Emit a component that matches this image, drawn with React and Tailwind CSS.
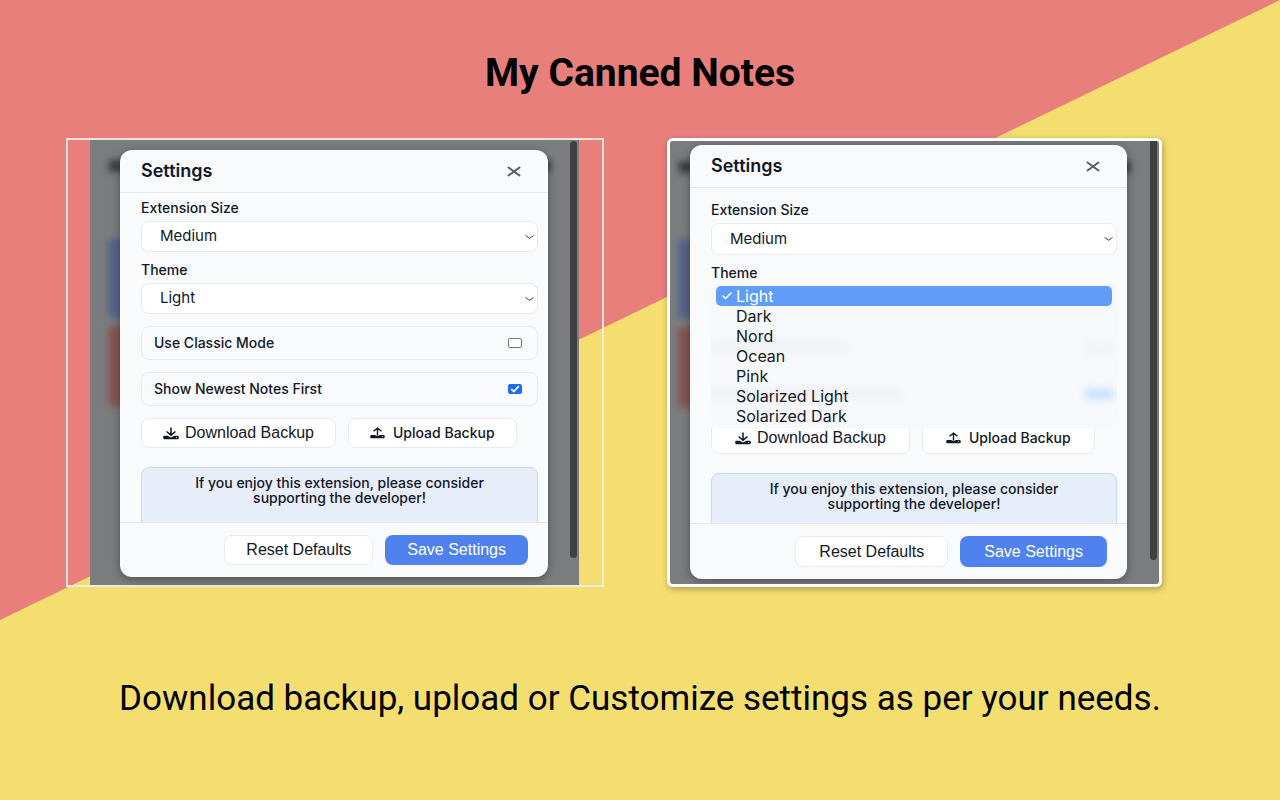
import { useState } from "react";
import { Check } from "lucide-react";

const sizes = ["Small", "Medium", "Large"];
const themes = [
  "Light",
  "Dark",
  "Nord",
  "Ocean",
  "Pink",
  "Solarized Light",
  "Solarized Dark",
];

function CloseIcon() {
  return (
    <svg width="14" height="11" viewBox="0 0 14 11" fill="none" aria-hidden="true">
      <path d="M1.500 1.500l11 8M12.500 1.500l-11 8" stroke="#565d6b" strokeWidth="2" strokeLinecap="round" />
    </svg>
  );
}

function DownloadIcon() {
  return (
    <svg width="16" height="13" viewBox="0 0 16 13" fill="none" aria-hidden="true">
      <path d="M8 .5v7.500M3.500 4.500L8 8.200l4.500-3.700" stroke="#111827" strokeWidth="1.500" />
      <path d="M1.500 8.800h3.200L8 10.400l3.300-1.600h3.200c.8 0 1.300.5 1.300 1.100v1.200c0 .6-.5 1.100-1.300 1.100h-13c-.8 0-1.300-.5-1.300-1.100V9.900c0-.6.5-1.100 1.300-1.100z" fill="#111827" />
      <circle cx="13.600" cy="10.500" r=".6" fill="#fff" />
    </svg>
  );
}

function UploadIcon() {
  return (
    <svg width="15" height="12" viewBox="0 0 15 12" fill="none" aria-hidden="true">
      <path d="M7.500 8.500V1.200M3.500 4.300l4-3.100 4 3.100" stroke="#111827" strokeWidth="1.400" />
      <path d="M1.500 8h4.200v.8h3.600V8h4.200c.7 0 1.200.5 1.200 1v1.200c0 .6-.5 1-1.200 1h-12c-.7 0-1.200-.4-1.200-1V9c0-.5.5-1 1.200-1z" fill="#111827" />
      <circle cx="12.500" cy="9.600" r=".5" fill="#fff" />
    </svg>
  );
}

function SelectField({ id, label, value, options, onChange, large, children }) {
  return (
    <div>
      <label htmlFor={id} className="block text-[14px] leading-[18px] font-medium">
        {label}
      </label>
      <div className="relative mt-1">
        <select
          id={id}
          value={value}
          onChange={(e) => onChange(e.target.value)}
          className={`block w-full appearance-none rounded-lg border border-[#e9ebef] bg-white pl-[18px] pr-6 text-[15px] ${
            large ? "h-8" : "h-[31px]"
          } ${children ? "invisible" : ""}`}
        >
          {options.map((option) => (
            <option key={option} value={option}>
              {option}
            </option>
          ))}
        </select>
        <svg
          className="pointer-events-none absolute right-1 top-1/2 -translate-y-1/2"
          width="9"
          height="5"
          viewBox="0 0 9 5"
          fill="none"
          aria-hidden="true"
        >
          <path d="M.5 1l4 2.800L8.500 1" stroke="#374151" />
        </svg>
        {children}
      </div>
    </div>
  );
}

function ToggleRow({ id, label, checked, onChange }) {
  return (
    <div className="flex h-[34px] items-center justify-between rounded-lg border border-[#e9ebef] pl-3 pr-[15px]">
      <label htmlFor={id} className="text-[14px] leading-4 font-medium">
        {label}
      </label>
      <span className="relative flex">
        <input
          id={id}
          type="checkbox"
          checked={checked}
          onChange={(e) => onChange(e.target.checked)}
          className="peer h-[10px] w-[14px] appearance-none rounded-[2px] border border-[#767676] bg-white checked:border-[#1a6df5] checked:bg-[#1a6df5]"
        />
        <svg
          className="pointer-events-none absolute inset-0 hidden peer-checked:block"
          width="14"
          height="10"
          viewBox="0 0 14 10"
          fill="none"
          aria-hidden="true"
        >
          <path d="M3.200 5.200l2.600 2.300 5-5.300" stroke="#fff" strokeWidth="1.700" />
        </svg>
      </span>
    </div>
  );
}

function ThemeMenu({ value, onSelect }) {
  return (
    <div className="absolute inset-x-0 -top-[3px] z-10 overflow-hidden rounded-lg bg-[#f7f8fb]">
      {/* frosted glass tint */}
      <div aria-hidden="true" className="absolute inset-x-0 top-[60px] flex justify-between pr-1 blur-[4px]">
        <span className="h-2 w-[136px] bg-[#eff0f3]" />
        <span className="h-3 w-7 bg-[#f2f3f6]" />
      </div>
      <div aria-hidden="true" className="absolute inset-x-0 top-[107px] flex justify-between pr-1 blur-[4px]">
        <span className="h-2 w-[188px] bg-[#eceef1]" />
        <span className="h-2 w-7 bg-[#b5d9fc]" />
      </div>
      <ul role="listbox" aria-label="Theme" className="relative px-[5px] pt-[3px] pb-[2px]">
        {themes.map((theme) => (
          <li
            key={theme}
            role="option"
            aria-selected={theme === value}
            onClick={() => onSelect(theme)}
            className={`flex h-5 items-center rounded-[5px] pl-[5px] text-[16px] leading-5 ${
              theme === value ? "bg-[#5f9df8] text-white" : "text-[#15181e]"
            }`}
          >
            <span className="w-[15px]">
              {theme === value && <Check size={12} strokeWidth={3} />}
            </span>
            {theme}
          </li>
        ))}
      </ul>
    </div>
  );
}

function SettingsModal({ name, large, defaultOpen }) {
  const [size, setSize] = useState("Medium");
  const [theme, setTheme] = useState("Light");
  const [classic, setClassic] = useState(false);
  const [newest, setNewest] = useState(true);
  const [menuOpen, setMenuOpen] = useState(defaultOpen);

  const reset = () => {
    setSize("Medium");
    setTheme("Light");
    setClassic(false);
    setNewest(true);
  };

  return (
    <section
      aria-label="Settings"
      className="relative flex h-full flex-col overflow-hidden rounded-xl bg-[#f9fafc] font-['Inter',sans-serif] text-[#111827] shadow-[0_2px_8px_rgba(0,0,0,0.35)]"
    >
      <header className="flex h-[43px] shrink-0 items-center justify-between border-b border-[#e5e7eb] pl-[21px] pr-[27px]">
        <h2 className="text-[18px] leading-6 font-semibold">Settings</h2>
        <button type="button" aria-label="Close">
          <CloseIcon />
        </button>
      </header>

      <div
        className={`flex min-h-0 flex-1 flex-col overflow-hidden pl-[21px] pr-[10px] ${
          large ? "pt-[13px]" : "pt-[6px]"
        }`}
      >
        <SelectField
          id={`${name}-size`}
          label="Extension Size"
          value={size}
          options={sizes}
          onChange={setSize}
          large={large}
        />
        <div className="mt-[9px]">
          <SelectField
            id={`${name}-theme`}
            label="Theme"
            value={theme}
            options={themes}
            onChange={setTheme}
            large={large}
          >
            {menuOpen && (
              <ThemeMenu
                value={theme}
                onSelect={(value) => {
                  setTheme(value);
                  setMenuOpen(false);
                }}
              />
            )}
          </SelectField>
        </div>
        <div className={`mt-3 flex flex-col gap-3 ${menuOpen ? "invisible" : ""}`}>
          <ToggleRow
            id={`${name}-classic`}
            label="Use Classic Mode"
            checked={classic}
            onChange={setClassic}
          />
          <ToggleRow
            id={`${name}-newest`}
            label="Show Newest Notes First"
            checked={newest}
            onChange={setNewest}
          />
        </div>
        <div className={`mt-3 flex shrink-0 gap-3 ${large ? "h-8" : "h-[30px]"}`}>
          <button
            type="button"
            className={`flex items-center gap-[6px] rounded-lg border border-[#e9ebef] bg-white font-['Liberation_Sans',sans-serif] text-[16px] ${
              large ? "px-[23px]" : "px-[21px]"
            }`}
          >
            <DownloadIcon />
            Download Backup
          </button>
          <button
            type="button"
            className={`flex items-center gap-2 rounded-lg border border-[#e9ebef] bg-white text-[14px] leading-4 font-medium ${
              large ? "px-[23px]" : "px-[21px]"
            }`}
          >
            <UploadIcon />
            Upload Backup
          </button>
        </div>
        <div className="mt-[19px] h-20 shrink-0 rounded-t-lg border border-[#c7d7fa] bg-[#e7edf9] px-8 pt-[7px] text-center text-[14px] leading-[15px] font-medium">
          <p>
            If you enjoy this extension, please consider
            <br />
            supporting the developer!
          </p>
        </div>
      </div>

      <footer
        className={`flex shrink-0 justify-end gap-3 border-t border-[#e5e7eb] pr-5 pt-3 pb-3 font-['Liberation_Sans',sans-serif] text-[16px] ${
          large ? "h-14" : "h-[55px]"
        }`}
      >
        <button
          type="button"
          onClick={reset}
          className={`rounded-lg border border-[#e9ebef] bg-white ${large ? "px-[23px]" : "px-[21px]"}`}
        >
          Reset Defaults
        </button>
        <button
          type="button"
          className={`rounded-lg bg-[#4f82ee] font-medium text-white ${large ? "px-6" : "px-[22px]"}`}
        >
          Save Settings
        </button>
      </footer>
    </section>
  );
}

// Dimmed, out of focus notes list behind the dialog
function NotesBackdrop({ large }) {
  return (
    <div
      aria-hidden="true"
      className={`absolute inset-y-0 right-[28px] blur-[3px] ${large ? "left-[8px]" : "left-[18px]"}`}
    >
      <div className="mt-5 h-3 rounded bg-[#3f4042]" />
      <div className="mt-[66px] mr-4 h-20 rounded bg-[#56648a]" />
      <div className="mt-2 mr-4 h-20 rounded bg-[#855552]" />
    </div>
  );
}

export default function App() {
  return (
    <main className="relative min-h-screen overflow-hidden bg-[#f4de6f] font-['Roboto',sans-serif] text-black">
      <div className="absolute inset-0 bg-[#e87f7b] [clip-path:polygon(0_0,100%_0,0_77.5%)]" />

      <div className="relative pt-[49px]">
        <h1 className="text-center text-[39px] leading-[48px] font-bold">My Canned Notes</h1>

        <div className="mt-[41px] grid grid-cols-[538fr_495fr] gap-[63px] pl-[66px] pr-[118px]">
          <div className="h-[449px] border-2 border-[#ececec]/90 pl-[22px] pr-[23px]">
            <div className="relative h-full bg-[#7b7c7e] pt-[10px] pr-[31px] pb-[8px] pl-[30px]">
              <NotesBackdrop />
              <SettingsModal name="left" />
              <div className="absolute right-[2px] top-[1px] bottom-[27px] w-[7px] rounded-full bg-[#404040]" />
            </div>
          </div>

          <div className="h-[449px] overflow-hidden rounded-md border-[3px] border-white shadow-[1px_2px_6px_rgba(0,0,0,0.3)]">
            <div className="relative h-full bg-[#7b7c7e] pt-1 pr-[32px] pb-[5px] pl-5">
              <NotesBackdrop large />
              <SettingsModal name="right" large defaultOpen />
              <div className="absolute right-[2px] top-0 bottom-6 w-[7px] rounded-b-full bg-[#404040]" />
            </div>
          </div>
        </div>

        <p className="mt-[90px] text-center text-[35px] leading-[44px]">
          Download backup, upload or Customize settings as per your needs.
        </p>
      </div>
    </main>
  );
}
